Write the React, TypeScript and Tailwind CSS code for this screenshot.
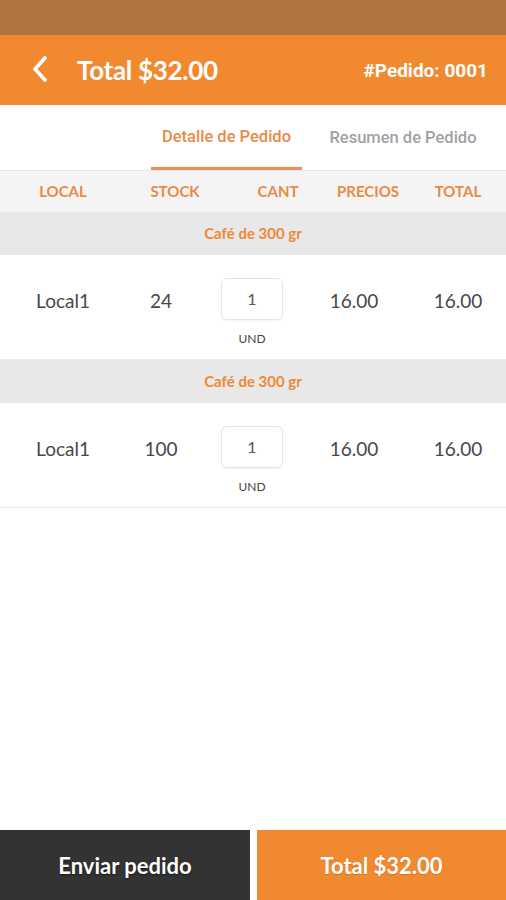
import React from 'react';

interface Item {
  name: string;
  local: string;
  stock: string;
  qty: string;
  price: string;
  total: string;
}

const items: Item[] = [
  { name: 'Café de 300 gr', local: 'Local1', stock: '24', qty: '1', price: '16.00', total: '16.00' },
  { name: 'Café de 300 gr', local: 'Local1', stock: '100', qty: '1', price: '16.00', total: '16.00' },
];

const App: React.FC = () => {
  return (
    <div className="w-[506px] h-[900px] flex flex-col bg-white font-['Lato','Liberation_Sans',sans-serif] overflow-hidden">
      {/* status bar */}
      <div className="h-[35px] bg-[#b0743e] shrink-0" />

      {/* app bar */}
      <div className="h-[70px] bg-[#f0892f] flex items-center pl-[30px] pr-[18px] shrink-0">
        <svg width="20" height="28" viewBox="0 0 20 28" fill="none" className="mt-[-2px]">
          <path d="M15 3 L5 14 L15 25" stroke="white" strokeWidth="3.6" strokeLinecap="round" strokeLinejoin="round" />
        </svg>
        <span className="ml-[27px] text-white font-bold text-[26px] tracking-[-0.3px]">Total $32.00</span>
        <span className="ml-auto text-white font-bold text-[19px] mt-[3px] font-['Roboto',sans-serif]">#Pedido: 0001</span>
      </div>

      {/* tabs */}
      <div className="h-[65px] flex shrink-0 bg-white font-['Roboto',sans-serif]">
        <div className="w-[151px]" />
        <div className="w-[151px] flex flex-col">
          <div className="flex-1 flex items-center justify-center text-[#e98a46] font-medium text-[16.5px] pt-[2px]">
            Detalle de Pedido
          </div>
          <div className="h-[3px] bg-[#ec8d55]" />
        </div>
        <div className="flex-1 flex items-center justify-center text-[#9ea2a6] font-medium text-[16.5px] pt-[2px] pr-[2px]">
          Resumen de Pedido
        </div>
      </div>

      {/* column header */}
      <div className="h-[42px] bg-[#f4f4f4] border-t border-[#e6e6e6] grid grid-cols-[126px_98px_108px_72px_1fr] items-center text-[#e98a46] font-bold text-[15px] shrink-0">
        <div className="text-center">LOCAL</div>
        <div className="text-center">STOCK</div>
        <div className="text-center">CANT</div>
        <div className="text-center">PRECIOS</div>
        <div className="text-center pl-[6px]">TOTAL</div>
      </div>

      {items.map((it, i) => (
        <div key={i} className="flex flex-col shrink-0">
          <div className="h-[43px] bg-[#e8e8e8] flex items-center justify-center text-[#ed8a35] font-bold text-[15px]">
            {it.name}
          </div>
          <div className="h-[105px] grid grid-cols-[126px_70px_112px_92px_1fr] items-start text-[#474747] text-[19px] border-b border-[#ececec]">
            <div className="text-center pt-[32px]">{it.local}</div>
            <div className="text-center pt-[32px]">{it.stock}</div>
            <div className="flex flex-col items-center pt-[23px]">
              <div className="w-[62px] h-[42px] rounded-[6px] border border-[#e4e4e4] shadow-[0_1px_2px_rgba(0,0,0,0.06)] bg-white flex items-center justify-center text-[16px] text-[#555]">
                {it.qty}
              </div>
              <div className="mt-[10px] text-[12px] text-[#444]">UND</div>
            </div>
            <div className="text-center pt-[32px]">{it.price}</div>
            <div className="text-center pt-[32px] pl-[10px]">{it.total}</div>
          </div>
        </div>
      ))}

      <div className="flex-1" />

      {/* bottom buttons */}
      <div className="h-[70px] flex gap-[7px] shrink-0">
        <button className="w-[250px] bg-[#333333] text-white font-bold text-[22px] [text-shadow:0_1px_2px_rgba(0,0,0,0.6)]">
          Enviar pedido
        </button>
        <button className="flex-1 bg-[#f0892f] text-white font-bold text-[22px] [text-shadow:0_1px_1px_rgba(0,0,0,0.15)]">
          Total $32.00
        </button>
      </div>
    </div>
  );
};

export default App;
